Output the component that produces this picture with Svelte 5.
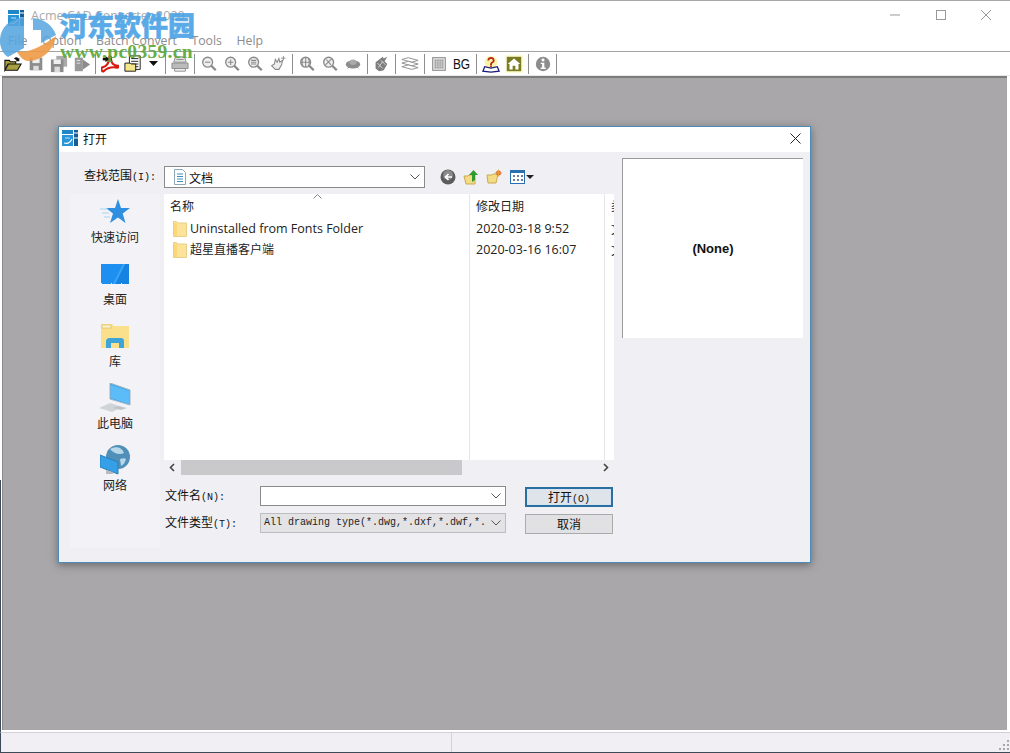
<script>
  const menus = ['File', 'Option', 'Batch Convert', 'Tools', 'Help'];
  const places = [
    { id: 'star', label: '快速访问' },
    { id: 'desk', label: '桌面' },
    { id: 'lib', label: '库' },
    { id: 'pc', label: '此电脑' },
    { id: 'net', label: '网络' }
  ];
  const files = [
    { name: 'Uninstalled from Fonts Folder', date: '2020-03-18 9:52', cjk: false },
    { name: '超星直播客户端', date: '2020-03-16 16:07', cjk: true }
  ];
</script>

{#snippet appIcon()}
  <svg class="appicon" viewBox="0 0 16 16" width="16" height="16">
    <rect x="0" y="0" width="11" height="4" fill="#1f86c8"/>
    <rect x="0" y="5" width="11" height="11" fill="#2a94d6"/>
    <rect x="12" y="0" width="4" height="16" fill="#155f96"/>
    <path d="M12 3h4M12 8h4" stroke="#fff" stroke-width="1"/>
    <path d="M2 13c3 1 6 0 8-4" stroke="#fff" stroke-width="1.100" fill="none"/>
    <path d="M3 8h5" stroke="#bfe3f7" stroke-width="1"/>
  </svg>
{/snippet}

{#snippet chevron()}
  <svg class="chev" viewBox="0 0 10 6" width="10" height="6"><path d="M.5.5 5 5 9.500.5" fill="none" stroke="#555" stroke-width="1"/></svg>
{/snippet}

{#snippet folder()}
  <svg viewBox="0 0 14 17" width="14" height="17"><path d="M.5 1.500h3l1.500 1.500h8.500v13.500h-13z" fill="#fde39a" stroke="#e8cf8a"/><rect x="1" y="3" width="3" height="13" fill="#fbd777"/></svg>
{/snippet}

{#snippet zoomBase(inner)}
  <circle cx="8.500" cy="8" r="5.500" fill="#eee" stroke="#8a8a8a" stroke-width="1.500"/>
  <path d="M12.500 12l5 5" stroke="#8a8a8a" stroke-width="2.500"/>
  <path d={inner} stroke="#8a8a8a" stroke-width="1.200" fill="none"/>
{/snippet}

<div class="window">
  <header class="titlebar">
    <div class="appslot">{@render appIcon()}</div>
    <span class="apptitle">Acme CAD Converter 2020</span>
    <div class="caption">
      <svg viewBox="0 0 10 10" width="10" height="10"><path d="M0 5h10" stroke="#999" stroke-width="1"/></svg>
      <svg viewBox="0 0 10 10" width="10" height="10"><rect x=".5" y=".5" width="9" height="9" fill="none" stroke="#999"/></svg>
      <svg viewBox="0 0 10 10" width="10" height="10"><path d="M0 0l10 10M10 0 0 10" stroke="#999" stroke-width="1"/></svg>
    </div>
  </header>

  <nav class="menubar">
    {#each menus as m}<span>{m}</span>{/each}
  </nav>

  <div class="toolbar">
    <button class="tb" aria-label="open"><svg viewBox="0 0 20 18"><path d="M1 7V5h5l1 1.500h6V9H5L1 16zM1 16l3.500-7H19l-4 7z" fill="#a8a040" stroke="#111" stroke-width="1.200"/><path d="M11 3c2-2 4-2 5 0l1-1v4h-4l1-1c-1-1-2-1-3-2z" fill="#111"/></svg></button>
    <button class="tb" aria-label="save"><svg viewBox="0 0 20 20"><path d="M3 3h14v14H3z" fill="#8c8c8c"/><rect x="6" y="3" width="8" height="6" fill="#efefef"/><rect x="7" y="12" width="6" height="5" fill="#ddd"/></svg></button>
    <button class="tb" aria-label="save all"><svg viewBox="0 0 20 20"><path d="M7 1h12v12H7z" fill="#aaa"/><path d="M1 5h14v14H1z" fill="#8c8c8c"/><rect x="4" y="5" width="8" height="5" fill="#efefef"/><rect x="5" y="13" width="6" height="6" fill="#ddd"/></svg></button>
    <button class="tb" aria-label="export"><svg viewBox="0 0 20 20"><path d="M2 3h9v15H2z" fill="#999"/><path d="M4 6h4M4 9h4" stroke="#eee"/><path d="M11 5l8 5.500-8 5.500z" fill="#8c8c8c"/></svg></button>
    <i class="sep"></i>
    <button class="tb" aria-label="pdf"><svg viewBox="0 0 20 20"><path d="M1 14c4-1 8-4 8-11 0-2 2-2 2 0 0 6 3 9 8 9 1 1 0 2-1 2-6-1-11 0-15 4-2 1-3-2-2-4z" fill="none" stroke="#d81a10" stroke-width="2.400"/><rect x="2" y="3" width="6" height="3" fill="#111"/><path d="M5 1l4 3.500-4 3.500z" fill="#111"/></svg></button>
    <button class="tb" aria-label="batch"><svg viewBox="0 0 20 20"><path d="M6 1h12v15H6z" fill="#fff" stroke="#111"/><path d="M8 4h8M8 7h8M8 10h8M8 13h8" stroke="#111"/><path d="M1 9h6l1 1h5v8H1z" fill="#f4e68a" stroke="#111"/></svg></button>
    <button class="tb narrow" aria-label="more"><svg class="tri" viewBox="0 0 9 5" width="9" height="5"><path d="M0 0h9L4.500 5z" fill="#111"/></svg></button>
    <i class="sep"></i>
    <button class="tb" aria-label="print"><svg viewBox="0 0 20 20"><path d="M5 2h10l2 6H3z" fill="#ddd" stroke="#8a8a8a"/><path d="M1 9h18v6H1z" fill="#bbb" stroke="#8a8a8a"/><path d="M4 15h12v3H4z" fill="#eee" stroke="#8a8a8a"/><path d="M6 5h8" stroke="#8a8a8a"/></svg></button>
    <i class="sep"></i>
    <button class="tb" aria-label="zoom out"><svg viewBox="0 0 20 20">{@render zoomBase('M5.500 8h6')}</svg></button>
    <button class="tb" aria-label="zoom in"><svg viewBox="0 0 20 20">{@render zoomBase('M5.500 8h6M8.500 5v6')}</svg></button>
    <button class="tb" aria-label="zoom window"><svg viewBox="0 0 20 20">{@render zoomBase('M5.500 6h6M5.500 8h6M5.500 10h6')}</svg></button>
    <button class="tb" aria-label="pan"><svg viewBox="0 0 20 20"><path d="M3 12l3-2 1-5 2 3 2-4 1 4 3-2-1 5-3 5H7z" fill="#eee" stroke="#8a8a8a" stroke-width="1.200"/><path d="M16 1v5M13.500 3.500h5" stroke="#8a8a8a"/></svg></button>
    <i class="sep"></i>
    <button class="tb" aria-label="zoom all"><svg viewBox="0 0 20 20">{@render zoomBase('M3 8h11M8.500 2.500v11M5.500 3.500c-1.500 3-1.500 6 0 9M11.500 3.500c1.500 3 1.500 6 0 9')}</svg></button>
    <button class="tb" aria-label="zoom prev"><svg viewBox="0 0 20 20">{@render zoomBase('M5 11l7-7M6 5l5 6')}</svg></button>
    <button class="tb" aria-label="view"><svg viewBox="0 0 20 20"><ellipse cx="10" cy="10.500" rx="8" ry="4.500" fill="#8c8c8c"/><ellipse cx="10" cy="8" rx="4" ry="3" fill="#aaa"/><path d="M4 15l2-2M16 15l-2-2" stroke="#8c8c8c"/></svg></button>
    <i class="sep"></i>
    <button class="tb" aria-label="layers"><svg viewBox="0 0 20 20"><path d="M4 8l8-6 1 2 4-2-3 5 3 3-4 7-5 1-4-3z" fill="#7d7d7d"/><path d="M6 9l6 6M10 6l5 5M7 14l5-7" stroke="#ddd"/></svg></button>
    <i class="sep"></i>
    <button class="tb" aria-label="stack"><svg viewBox="0 0 20 20" fill="#fff" stroke="#8a8a8a"><path d="M1 5l7-2 11 3-7 2z"/><path d="M1 9l7-2 11 3-7 2z"/><path d="M1 13l7-2 11 3-7 2z"/></svg></button>
    <i class="sep"></i>
    <button class="tb" aria-label="grid"><svg viewBox="0 0 20 20"><rect x="3" y="3" width="14" height="14" fill="#eee" stroke="#8a8a8a" stroke-width="1.200"/><rect x="5" y="5" width="10" height="10" fill="#999"/><path d="M5 7.500h10M5 10h10M5 12.500h10M7.500 5v10M10 5v10M12.500 5v10" stroke="#ddd" stroke-width=".7"/></svg></button>
    <button class="tb bg">BG</button>
    <i class="sep"></i>
    <button class="tb" aria-label="help"><svg viewBox="0 0 20 20"><circle cx="10" cy="8" r="7" fill="#fdf3a8"/><path d="M6 6c0-5 8-5 8 0 0 3-3 2-3 5H9c0-4 3-3 3-5 0-2-4-2-4 0z" fill="#b3261a"/><rect x="9" y="11.500" width="2" height="2" fill="#b3261a"/><path d="M1 18l2-5 7 1.500L17 13l2 5-9 1z" fill="#fff" stroke="#1a1a7a" stroke-width="1.400"/></svg></button>
    <button class="tb" aria-label="home"><svg viewBox="0 0 20 20"><rect x="0" y="0" width="20" height="20" rx="1.500" fill="#fdfbd0"/><rect x="2" y="2" width="16" height="16" fill="#7b7b22"/><path d="M10 4l7 6h-2v6h-3.500v-4h-3v4H5v-6H3z" fill="#fff"/></svg></button>
    <i class="sep"></i>
    <button class="tb" aria-label="about"><svg viewBox="0 0 20 20"><circle cx="10" cy="10" r="8" fill="#8c8c8c"/><rect x="8.500" y="4" width="3" height="3" fill="#fff"/><path d="M7.500 8.500h4V14h1.500v1.500H7.500V14H9v-4H7.500z" fill="#fff"/></svg></button>
    <i class="sep"></i>
  </div>

  <main class="mdi"></main>

  <footer class="statusbar">
    <div class="pane wide"></div>
    <div class="pane">
      <svg class="grip" viewBox="0 0 12 12" width="12" height="12" fill="#a8a8a8"><rect x="9" y="1" width="2" height="2"/><rect x="9" y="5" width="2" height="2"/><rect x="5" y="5" width="2" height="2"/><rect x="9" y="9" width="2" height="2"/><rect x="5" y="9" width="2" height="2"/><rect x="1" y="9" width="2" height="2"/></svg>
    </div>
  </footer>

  <div class="watermark">
    <svg class="wmlogo" viewBox="0 0 60 50" width="60" height="50">
      <path d="M0 27C-1 13 8 3 24 1V32L8 41C3 38 1 33 0 27z" fill="#57a5de" opacity=".88"/>
      <path d="M33 2C45 3 53 10 56 19L41 27V14H33z" fill="#57a5de" opacity=".85"/>
      <path d="M17 36C30 37 44 29 56 20 54 34 42 45 28 45 24 45 20 41 17 36z" fill="#ee9a46" opacity=".9"/>
    </svg>
    <div class="wmtext">河东软件园</div>
    <div class="wmurl">www.pc0359.cn</div>
  </div>

  <section class="dialog" aria-label="打开">
    <div class="dlgtitle">
      <div class="dlgicon">{@render appIcon()}</div>
      <span>打开</span>
      <svg class="dlgclose" viewBox="0 0 11 11" width="11" height="11"><path d="M.5.5l10 10M10.500.5l-10 10" stroke="#222" stroke-width="1"/></svg>
    </div>

    <div class="dlgbody">
      <div class="leftcol">
        <div class="lookrow">
          <label class="mixed looklabel" for="look">查找范围<small>(I):</small></label>
          <div class="combo look" id="look">
            <svg viewBox="0 0 14 16" width="14" height="16"><path d="M1.500.5h8l3 3v12h-11z" fill="#fff" stroke="#8fa6b5"/><path d="M4 5h6M4 7.500h6M4 10h6M4 12.500h6" stroke="#3a8fc0"/></svg>
            <span>文档</span>
            {@render chevron()}
          </div>
          <div class="navicons">
            <svg viewBox="0 0 16 16" width="16" height="16"><circle cx="8" cy="8" r="7.500" fill="#5c5c5c"/><circle cx="8" cy="6" r="5" fill="#8a8a8a"/><path d="M12 8H6M8.500 5 5.500 8l3 3" stroke="#fff" stroke-width="1.700" fill="none"/></svg>
            <svg viewBox="0 0 16 17" width="16" height="17"><path d="M1 7h4l1-1h6v9H3z" fill="#f3dc85" stroke="#c9aa50"/><path d="M9 13V6H6l4.500-5L15 6h-3v5z" fill="#2e9a30"/></svg>
            <svg viewBox="0 0 16 16" width="16" height="16"><path d="M1 6h5l1-1h5l-2 9H2z" fill="#f3dc85" stroke="#c9aa50"/><circle cx="12.500" cy="4" r="2.500" fill="#e8643c"/><path d="M12.500.5v7M9 4h7" stroke="#e8a03c"/></svg>
            <div class="viewbtn">
              <svg viewBox="0 0 15 14" width="15" height="14"><rect x=".5" y=".5" width="14" height="13" fill="#fff" stroke="#2a6fb0"/><rect x="0" y="0" width="15" height="3" fill="#2a6fb0"/><g fill="#6a7fa0"><rect x="3" y="5" width="2" height="2"/><rect x="7" y="5" width="2" height="2"/><rect x="11" y="5" width="2" height="2"/><rect x="3" y="9" width="2" height="2"/><rect x="7" y="9" width="2" height="2"/><rect x="11" y="9" width="2" height="2"/></g></svg>
              <svg viewBox="0 0 8 4" width="8" height="4"><path d="M0 0h8L4 4z" fill="#222"/></svg>
            </div>
          </div>
        </div>

        <div class="mainrow">
          <aside class="places">
            {#each places as p}
              <div class="place">
                <div class="picon">
                  {#if p.id === 'star'}
                    <svg viewBox="0 0 30 28" width="30" height="28"><path d="M18 1l3 9h9l-7.300 5.500L25.500 25 18 19.500 10 25l3-9.500L6 10h9z" fill="#2f8fe0"/><path d="M0 11h8M2 15h7M4 19h6" stroke="#a6d2f0"/></svg>
                  {:else if p.id === 'desk'}
                    <svg viewBox="0 0 28 20" width="28" height="20"><rect width="28" height="20" fill="#1c8ff0"/><path d="M14 20 24 0h4v20z" fill="#1683e2"/><path d="M12 20 22 0h2L14 20z" fill="#3ba6f4"/><path d="M0 19.500h28" stroke="#d6ecff" stroke-dasharray="1 9"/></svg>
                  {:else if p.id === 'lib'}
                    <svg viewBox="0 0 28 24" width="28" height="24"><path d="M0 0h11l2 2h15v22H0z" fill="#fbe08c"/><rect x="1" y="1" width="9" height="3" fill="#fff4c8" stroke="#c9a94c" stroke-width=".5"/><path d="M5 24v-7c0-2 2-3 3-3h12c2 0 3 1 3 3v7h-5v-5h-8v5z" fill="#3fa4d8"/></svg>
                  {:else if p.id === 'pc'}
                    <svg viewBox="0 0 32 30" width="32" height="30"><path d="M11 0l20 7v15L11 16z" fill="#3fa6ee" stroke="#9fb6c4"/><path d="M12 2l18 6v13L12 15z" fill="#5cbcf8"/><path d="M0 25l11-5 12 4-10 5z" fill="#d0d4d8"/><path d="M19 23l9 2-6 2-8-2z" fill="#c0c4c8"/></svg>
                  {:else}
                    <svg viewBox="0 0 30 30" width="30" height="30"><circle cx="18" cy="12" r="12" fill="#4f8fb8"/><path d="M10 4c6-3 12-2 14 4-4 2-10 1-14-4zM20 14c3-1 5-1 6 0-1 4-3 6-5 7z" fill="#b8d8ea"/><path d="M0 10l18 7v12L0 22z" fill="#35a0e8" stroke="#2b7fb8"/><path d="M6 25l7 2v2H6z" fill="#bbb"/></svg>
                  {/if}
                </div>
                <span class="plabel">{p.label}</span>
              </div>
            {/each}
          </aside>

          <div class="rightpane">
            <div class="list">
              <div class="thead">
                <div class="col c1">名称<svg class="sort" viewBox="0 0 9 5" width="9" height="5"><path d="M.5 4.500 4.500.5l4 4" stroke="#888" fill="none"/></svg></div>
                <div class="col c2">修改日期</div>
                <div class="col c3"><span class="clipped">类型</span></div>
              </div>
              <div class="tbody">
                <div class="rows">
                  {#each files as f}
                    <div class="row">
                      <div class="col c1 fname">{@render folder()}<span class:cjk={f.cjk}>{f.name}</span></div>
                      <div class="col c2">{f.date}</div>
                      <div class="col c3"><span class="clipped">文</span></div>
                    </div>
                  {/each}
                </div>
              </div>
            </div>

            <div class="hscroll">
              <svg viewBox="0 0 6 9" width="6" height="9"><path d="M5 1 1.500 4.500 5 8" stroke="#444" stroke-width="1.600" fill="none"/></svg>
              <div class="track"><div class="thumb"></div></div>
              <svg viewBox="0 0 6 9" width="6" height="9"><path d="M1 1l3.500 3.500L1 8" stroke="#444" stroke-width="1.600" fill="none"/></svg>
            </div>

            <div class="formgrid">
              <span class="mixed flabel">文件名<small>(N):</small></span>
              <div class="combo fname-input">{@render chevron()}</div>
              <button class="btn default"><span class="mixed">打开<small>(O)</small></span></button>
              <span class="mixed flabel">文件类型<small>(T):</small></span>
              <div class="combo ftype"><span>All drawing type(*.dwg,*.dxf,*.dwf,*.</span>{@render chevron()}</div>
              <button class="btn"><span class="mixed">取消</span></button>
            </div>
          </div>
        </div>
      </div>

      <div class="preview"><b>(None)</b></div>
    </div>
  </section>
</div>

<style>
  :global(body) { margin: 0; background: #fff; }
  .window {
    position: relative;
    width: 1010px;
    height: 753px;
    overflow: hidden;
    background: linear-gradient(#3c4a58, #3c4a58) 0 480px / 1px 100% no-repeat, #fff;
    display: flex;
    flex-direction: column;
    font-family: "Noto Sans CJK SC", sans-serif;
    box-sizing: border-box;
    border-bottom: 1px solid #3c4a58;
  }

  .titlebar { height: 34px; display: flex; align-items: flex-start; flex: none; border-top: 1px solid #a8a8a8; box-sizing: border-box; }
  .appslot { margin: 6px 0 0 8px; width: 16px; height: 16px; }
  .apptitle { margin: 6px 0 0 7px; font: 12.500px/18px "Open Sans", sans-serif; color: #a9a9a9; }
  .caption { margin-left: auto; display: flex; gap: 35.500px; padding: 9px 19px 0 0; }
  .caption svg { display: block; }

  .menubar { height: 17px; flex: none; display: flex; font: 12.300px/14px "Open Sans", sans-serif; color: #8c8c8c; padding-left: 8px; gap: 14.500px; }

  .toolbar { height: 25px; flex: none; box-sizing: border-box; border-top: 1px solid #a3a3a3; border-bottom: 1px solid #e8e8e8; display: flex; align-items: center; padding-left: 1px; }
  .tb { width: 23px; height: 22px; padding: 0; border: 0; background: none; display: flex; align-items: center; justify-content: center; flex: none; }
  .tb svg { width: 18px; height: 18px; display: block; }
  .tb.narrow { width: 18px; }
  .tb.narrow svg.tri { width: 9px; height: 5px; }
  .tb.bg { font: 14.500px/20px "Liberation Sans", sans-serif; color: #111; transform: scaleX(.82); }
  .sep { width: 1px; height: 20px; background: #8e8e8e; margin: 0 2.400px; flex: none; }

  .mdi { flex: 1; margin: 0 3px 0 2px; background: #a9a7a9; border-top: 2px solid #7c7c7c; box-shadow: inset 1px 0 0 #8a8a8a; }

  .statusbar { height: 20px; flex: none; display: flex; background: #f1eff3; border-top: 1px solid #d2d0d3; margin: 2px 0 0 0; border-left: 1px solid #3c4a58; box-sizing: border-box; }
  .pane { position: relative; flex: 1; }
  .pane.wide { flex: none; width: 450px; border-right: 1px solid #d4d2d6; }
  .grip { position: absolute; right: 0; bottom: 1px; }

  .watermark { position: absolute; left: 0; top: 0; width: 200px; height: 70px; pointer-events: none; }
  .wmlogo { position: absolute; left: 0; top: 16px; }
  .wmtext { position: absolute; left: 60px; top: 8px; font: 900 27px/34px "Noto Sans CJK SC", sans-serif; color: #4ba3e6; -webkit-text-stroke: .5px #4ba3e6; opacity: .92; white-space: nowrap; }
  .wmurl { position: absolute; left: 60px; top: 42px; font: 700 19.500px/20px "Liberation Serif", serif; color: #5aa838; white-space: nowrap; letter-spacing: .3px; opacity: .92; }

  .dialog {
    position: absolute;
    left: 58px;
    top: 126px;
    width: 753px;
    height: 437px;
    box-sizing: border-box;
    border: 1px solid #4d8cb8;
    background: #f0eff3;
    box-shadow: 0 2px 8px rgba(50, 50, 50, .55);
    display: flex;
    flex-direction: column;
  }
  .dlgtitle { height: 25px; flex: none; background: #fff; display: flex; align-items: center; font-size: 12px; color: #111; padding-bottom: 3px; box-sizing: border-box; }
  .dlgicon { width: 16px; height: 16px; margin: 0 5px 0 3px; }
  .dlgclose { margin-left: auto; margin-right: 9px; }

  .dlgbody { flex: 1; display: flex; min-height: 0; }
  .leftcol { width: 555px; padding-left: 11px; flex: none; box-sizing: border-box; }

  .mixed { font: 12px/16px "Noto Sans CJK SC", sans-serif; color: #111; white-space: nowrap; }
  .mixed small { font: 10px/16px "Liberation Mono", monospace; }

  .lookrow { height: 42px; display: flex; align-items: flex-start; padding-top: 14px; box-sizing: border-box; }
  .looklabel { width: 94px; padding-left: 14px; margin-top: 1px; flex: none; box-sizing: border-box; }
  .combo { display: flex; align-items: center; box-sizing: border-box; position: relative; flex: none; }
  .chev { margin-left: auto; flex: none; }
  .look { width: 261px; height: 22px; background: #fff; border: 1px solid #8a8a8a; padding: 0 4px 0 8px; gap: 2px; font-size: 12px; color: #111; }
  .navicons { display: flex; align-items: center; gap: 7px; margin-left: 15px; height: 22px; }
  .viewbtn { display: flex; align-items: center; gap: 1px; margin-left: 1px; }

  .mainrow { display: flex; gap: 4px; height: 354px; }
  .places { width: 90px; background: #f3f2f6; flex: none; display: flex; flex-direction: column; padding-top: 4px; box-sizing: border-box; }
  .place { height: 62px; display: flex; flex-direction: column; align-items: center; flex: none; }
  .picon { height: 32px; display: flex; align-items: center; justify-content: center; margin-top: -2px; }
  .plabel { font-size: 12px; line-height: 16px; margin-top: 1px; color: #222; }

  .rightpane { width: 450px; flex: none; }
  .list { height: 266px; background: #fff; display: flex; flex-direction: column; font-size: 12px; color: #222; }
  .thead { display: flex; height: 24px; flex: none; align-items: center; }
  .thead .col { padding-bottom: 2px; }
  .col { box-sizing: border-box; flex: none; white-space: nowrap; overflow: hidden; padding-left: 6px; height: 100%; display: flex; align-items: center; }
  .c1 { width: 306px; border-right: 1px solid #e7e7e7; position: relative; }
  .c2 { width: 135px; border-right: 1px solid #e7e7e7; }
  .c3 { width: 9px; padding-left: 6px; }
  .clipped { display: block; width: 3px; overflow: hidden; }
  .sort { position: absolute; left: 149px; top: 0; }
  .tbody { flex: 1; min-height: 0; display: flex; }
  .rows { flex: 1; display: flex; flex-direction: column; }
  .rows::after { content: ""; flex: 1; width: 441px; box-sizing: border-box; border-right: 1px solid #e7e7e7; background: linear-gradient(#e7e7e7, #e7e7e7) 305px 0 / 1px 100% no-repeat; }
  .row { display: flex; height: 21px; flex: none; font: 12.500px/21px "Open Sans", "Noto Sans CJK SC", sans-serif; }
  .row .c3 { font-family: "Noto Sans CJK SC", sans-serif; font-size: 12px; }
  .fname { padding-left: 9px; gap: 3px; }
  .fname .cjk { font-size: 12px; }

  .hscroll { height: 15px; display: flex; align-items: center; background: #f0eff3; }
  .hscroll svg { flex: none; margin: 0 5px; }
  .track { flex: 1; height: 100%; margin-left: 1px; }
  .thumb { width: 281px; height: 100%; background: #c9c8ca; }

  .formgrid { display: grid; grid-template-columns: 96px 246px 88px; column-gap: 0; grid-template-rows: 20px 20px; row-gap: 7px; padding-top: 11px; align-items: center; }
  .flabel { padding-left: 1px; }
  .fname-input { width: 246px; height: 20px; background: #fff; border: 1px solid #8a8a8a; padding-right: 4px; grid-column: 2; }
  .ftype { width: 246px; height: 20px; background: #e3e2e5; border: 1px solid #bdbcbf; padding: 0 4px 0 3px; font: 10px/18px "Liberation Mono", monospace; color: #222; white-space: nowrap; overflow: hidden; }
  .btn { margin-left: 19px; width: 88px; height: 20px; padding: 0; background: #e1e0e3; border: 1px solid #ababab; box-sizing: border-box; text-align: center; line-height: 16px; position: relative; top: 1px; }
  .btn.default { border: 2px solid #2a6f9f; background: #dfe3ea; box-shadow: inset 0 0 0 1px #d4e4f2; }

  .preview { width: 181px; height: 180px; margin: 6px 0 0 8px; background: #fff; border-left: 1px solid #9a9a9a; border-top: 1px solid #9a9a9a; box-sizing: border-box; display: flex; align-items: center; justify-content: center; font: 700 13px/16px "Liberation Sans", sans-serif; color: #111; flex: none; }
</style>
